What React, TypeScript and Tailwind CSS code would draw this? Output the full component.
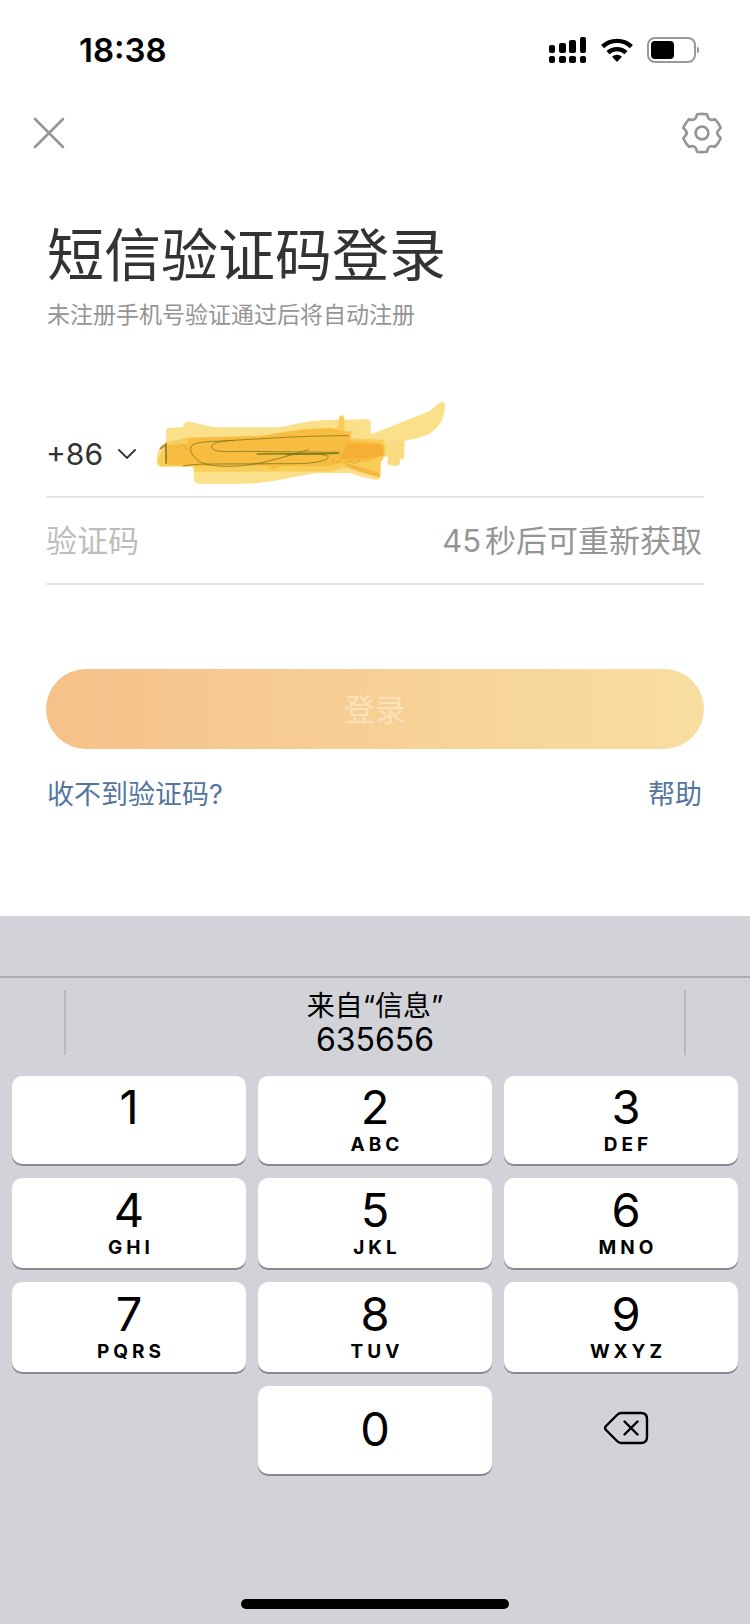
import { useState } from "react";

const KEYS = [
  { digit: "1", letters: "" },
  { digit: "2", letters: "ABC" },
  { digit: "3", letters: "DEF" },
  { digit: "4", letters: "GHI" },
  { digit: "5", letters: "JKL" },
  { digit: "6", letters: "MNO" },
  { digit: "7", letters: "PQRS" },
  { digit: "8", letters: "TUV" },
  { digit: "9", letters: "WXYZ" },
];

const keyClass =
  "flex flex-col items-center justify-center rounded-[10px] bg-white shadow-[0_2px_0_#8a8a8e]";

function StatusBar() {
  return (
    <div className="flex h-[100px] items-center justify-between pl-[79px] pr-[49px]">
      <span className="text-[33px] leading-10 font-semibold">18:38</span>
      <div className="flex items-center gap-[14px]">
        <svg width="38" height="28" viewBox="0 0 38 28">
          <rect x="0" y="9" width="6" height="8" rx="2" />
          <rect x="10" y="7" width="7" height="10" rx="2" />
          <rect x="20" y="4" width="7" height="13" rx="2" />
          <rect x="31" y="1" width="6" height="16" rx="2" />
          <rect x="0" y="20" width="6" height="7" rx="2" />
          <rect x="10" y="20" width="7" height="7" rx="2" />
          <rect x="20" y="20" width="7" height="7" rx="2" />
          <rect x="31" y="20" width="6" height="7" rx="2" />
        </svg>
        <svg width="32" height="26" viewBox="0 0 32 26">
          <path
            d="M1.6 9.6A21 21 0 0 1 30.4 9.6M7 15.6A13.3 13.3 0 0 1 25 15.6"
            fill="none"
            stroke="#000"
            strokeWidth="4.4"
          />
          <path d="M16 25 11 19.8A7.4 7.4 0 0 1 21 19.8Z" />
        </svg>
        <svg width="54" height="26" viewBox="0 0 54 26">
          <rect
            x="1"
            y="1"
            width="47"
            height="24"
            rx="7"
            fill="none"
            stroke="#999"
            strokeWidth="2"
          />
          <rect x="4" y="4" width="23" height="18" rx="4" />
          <path d="M50 9.5C53 10.5 53 15.5 50 16.5Z" fill="#999" />
        </svg>
      </div>
    </div>
  );
}

function Header() {
  return (
    <header className="flex h-[66px] items-center justify-between pl-[33px] pr-[27px]">
      <button type="button" aria-label="关闭">
        <svg width="32" height="32" viewBox="0 0 32 32">
          <path
            d="M2 2 30 30M30 2 2 30"
            stroke="#959595"
            strokeWidth="2.6"
            strokeLinecap="round"
          />
        </svg>
      </button>
      <button type="button" aria-label="设置">
        <svg
          width="42"
          height="42"
          viewBox="-21 -21 42 42"
          fill="none"
          stroke="#959595"
          strokeWidth="2.6"
          strokeLinejoin="round"
        >
          <path d="M-4.9-18.8Q0-19.4 4.900-18.8L6-15.4C7-13 10-12.600 13-13.900Q16.600-10 18.7-5.200L16.400-2.600C15-1 15 1 16.400 2.600L18.7 5.200Q16.600 10 13 13.900C10 12.600 7 13 6 15.400L4.900 18.8Q0 19.400-4.900 18.800L-6 15.400C-7 13-10 12.600-13 13.900Q-16.600 10-18.700 5.200L-16.400 2.600C-15 1-15-1-16.400-2.600L-18.700-5.200Q-16.600-10-13-13.900C-10-12.600-7-13-6-15.400Z" />
          <circle r="6.4" />
        </svg>
      </button>
    </header>
  );
}

// Marker strokes that hide the phone number
function Scribble() {
  return (
    <svg
      className="pointer-events-none absolute -left-2 bottom-[6px]"
      width="300"
      height="95"
      viewBox="0 0 900 285"
      fill="none"
    >
      <defs>
        <filter id="marker-edge">
          <feGaussianBlur stdDeviation="2" />
        </filter>
      </defs>
      <g filter="url(#marker-edge)">
        <path
          d="M48 108Q48 98 58 98L100 97Q98 82 114 80C150 84 170 96 210 97L385 97C440 88 480 74 540 75L566 74 568 66Q575 54 583 66L584 74 652 73Q662 74 662 84L662 118C720 96 780 72 835 50C855 38 862 22 876 20Q887 22 885 36C882 74 868 98 838 116C800 132 750 142 706 148L700 180Q690 196 692 244Q690 256 678 254C650 250 625 244 600 234L500 234C420 246 360 266 280 266L150 266Q134 264 132 254L130 215 30 215Q16 210 20 196Q22 152 48 142Z"
          fill="#fae08a"
        />
        <path
          d="M712 138 754 134Q764 136 764 148L762 190Q758 194 750 193L749 208Q746 213 738 213L720 211Q712 210 713 198L714 184 690 188 690 142Z"
          fill="#f9dc82"
        />
        <path
          d="M50 142 112 128 330 122C400 114 440 98 510 100L564 100 567 68Q575 56 582 68L584 110 610 108 600 130 700 134 708 160 700 190 692 200 690 248Q660 240 590 218L540 230 132 230 130 214 34 214Q20 208 24 190L40 160Z"
          fill="#f9ce58"
        />
        <path
          d="M112 128 330 124C400 114 440 104 540 100L600 112 602 136 700 146 704 180 650 200 560 206 540 214 390 214 370 226 350 212 130 214 50 208 44 180 48 150 112 148Z"
          fill="#f8bd40"
        />
        <path
          d="M590 146 690 146Q706 158 696 182L650 190 570 192ZM575 200C620 214 660 222 690 236L688 246C650 238 620 228 590 214Z"
          fill="#f5a531"
          opacity=".6"
        />
      </g>
      <path
        d="M80 160C92 142 108 148 110 166M545 194Q556 212 572 194M597 196Q612 216 632 192"
        stroke="#a8872e"
        strokeWidth="4"
        opacity=".25"
      />
      <path d="M30 162 48 148V206" stroke="#7d6a26" strokeWidth="6" opacity=".7" />
      <path
        d="M595 122C490 122 400 127 320 132C240 137 185 137 185 155C188 175 240 169 280 169L565 172M475 164C430 178 370 196 330 204C260 218 180 218 150 200C120 182 110 150 140 145C170 138 210 139 250 136M410 180C480 174 530 176 535 186C535 198 490 205 440 206L200 207C160 207 130 207 100 213"
        stroke="#6f7318"
        strokeWidth="2.6"
        strokeLinecap="round"
        opacity=".85"
      />
      <path
        d="M320 177 C400 174 480 180 568 174"
        stroke="#6f7318"
        strokeWidth="5"
        opacity=".85"
      />
    </svg>
  );
}

function Keyboard({ onKey }: { onKey: (key: string) => void }) {
  return (
    <div className="flex flex-1 flex-col bg-[#d1d3d9]">
      <div className="h-[62px] border-b-2 border-[#a9abb0]" />

      {/* Code suggestion */}
      <div className="flex h-[98px] justify-between px-16 pt-3 pb-[21px]">
        <div className="w-[2px] bg-[#b7b9be]" />
        <button
          type="button"
          onClick={() => onKey("635656")}
          className="flex flex-1 flex-col items-center justify-center"
        >
          <span className="text-[28px] leading-[34px]">来自“信息”</span>
          <span className="text-[32px] leading-[34px]">635656</span>
        </button>
        <div className="w-[2px] bg-[#b7b9be]" />
      </div>

      {/* Number pad */}
      <div className="grid grid-cols-3 grid-rows-[88px_90px_90px_88px] gap-x-3 gap-y-[14px] px-3">
        {KEYS.map((key) => (
          <button
            key={key.digit}
            type="button"
            onClick={() => onKey(key.digit)}
            className={`${keyClass} pt-1.5 nth-[3n]:pl-2.5`}
          >
            <span className="text-[47px] leading-[44px]">{key.digit}</span>
            <span className="h-8 pl-1 text-[19px] leading-8 font-bold tracking-[4px]">
              {key.letters}
            </span>
          </button>
        ))}
        <button
          type="button"
          onClick={() => onKey("0")}
          className={`${keyClass} col-start-2 pb-0.5`}
        >
          <span className="text-[47px] leading-[44px]">0</span>
        </button>
        <button
          type="button"
          aria-label="删除"
          onClick={() => onKey("back")}
          className="flex items-center justify-center pb-1 pl-2.5"
        >
          <svg
            width="46"
            height="34"
            viewBox="0 0 46 34"
            fill="none"
            stroke="#000"
            strokeWidth="2.4"
            strokeLinecap="round"
            strokeLinejoin="round"
          >
            <path d="M18 2H38Q44 2 44 8V26Q44 32 38 32H18Q16 32 14 30L3 19Q1.200 17 3 15L14 4Q16 2 18 2Z" />
            <path d="M21.500 10.500 34.500 23.500M34.500 10.500 21.500 23.500" />
          </svg>
        </button>
      </div>

      <div className="mt-auto flex justify-center pt-[80px] pb-[15px]">
        <div className="h-[10px] w-[268px] rounded-full bg-black" />
      </div>
    </div>
  );
}

export default function App() {
  const [phone, setPhone] = useState("");
  const [code, setCode] = useState("");

  const handleKey = (key: string) => {
    if (key === "back") {
      setCode((c) => c.slice(0, -1));
    } else {
      setCode((c) => (c + key).slice(0, 6));
    }
  };

  return (
    <div className="flex min-h-screen flex-col bg-white font-['Inter','Noto_Sans_CJK_SC',sans-serif] text-black">
      <StatusBar />
      <Header />

      <main className="px-[46px] pt-14 pb-[101px]">
        <h1 className="pl-px text-[57px] leading-[68px] text-[#333]">
          短信验证码登录
        </h1>
        <p className="mt-[9px] pl-px text-[23px] leading-8 text-[#959595]">
          未注册手机号验证通过后将自动注册
        </p>

        <form onSubmit={(e) => e.preventDefault()}>
          {/* Phone number */}
          <div className="mt-[79px] flex h-[88px] items-center border-b-2 border-[#e4e4e4]">
            <label className="flex w-[112px] items-center gap-[14px] pt-0.5">
              <select
                aria-label="国家代码"
                className="w-[58px] appearance-none text-[30px] leading-10 text-[#333] outline-none"
              >
                <option>+86</option>
              </select>
              <svg width="18" height="12" viewBox="0 0 18 12" fill="none">
                <path
                  d="M1 2 9 10 17 2"
                  stroke="#333"
                  strokeWidth="1.800"
                  strokeLinecap="round"
                />
              </svg>
            </label>
            <div className="relative flex h-full flex-1 items-center">
              <input
                type="tel"
                aria-label="手机号"
                value={phone}
                onChange={(e) => setPhone(e.target.value)}
                className="w-full text-[30px] leading-10 text-[#333] outline-none"
              />
              <Scribble />
            </div>
          </div>

          {/* SMS code */}
          <div className="flex h-[87px] items-center justify-between border-b-2 border-[#e4e4e4]">
            <input
              type="text"
              inputMode="numeric"
              aria-label="验证码"
              placeholder="验证码"
              value={code}
              onChange={(e) => setCode(e.target.value)}
              className="min-w-0 flex-1 text-[31px] leading-10 outline-none placeholder:text-[#bdbdbd]"
            />
            <span className="flex gap-1 pr-0.5 text-[31px] leading-10 text-[#959595]">
              <span>45</span>
              <span>秒后可重新获取</span>
            </span>
          </div>

          <button
            type="submit"
            className="mt-[84px] h-20 w-full rounded-full bg-linear-to-r from-[#f5c189] to-[#f8dea1] pt-0.5 text-[31px] leading-10 text-[#fae2bd]"
          >
            登录
          </button>
        </form>

        <div className="mt-[26px] flex justify-between pr-0.5 pl-px text-[27px] leading-10 text-[#54759e]">
          <a href="#resend">收不到验证码?</a>
          <a href="#help">帮助</a>
        </div>
      </main>

      <Keyboard onKey={handleKey} />
    </div>
  );
}
